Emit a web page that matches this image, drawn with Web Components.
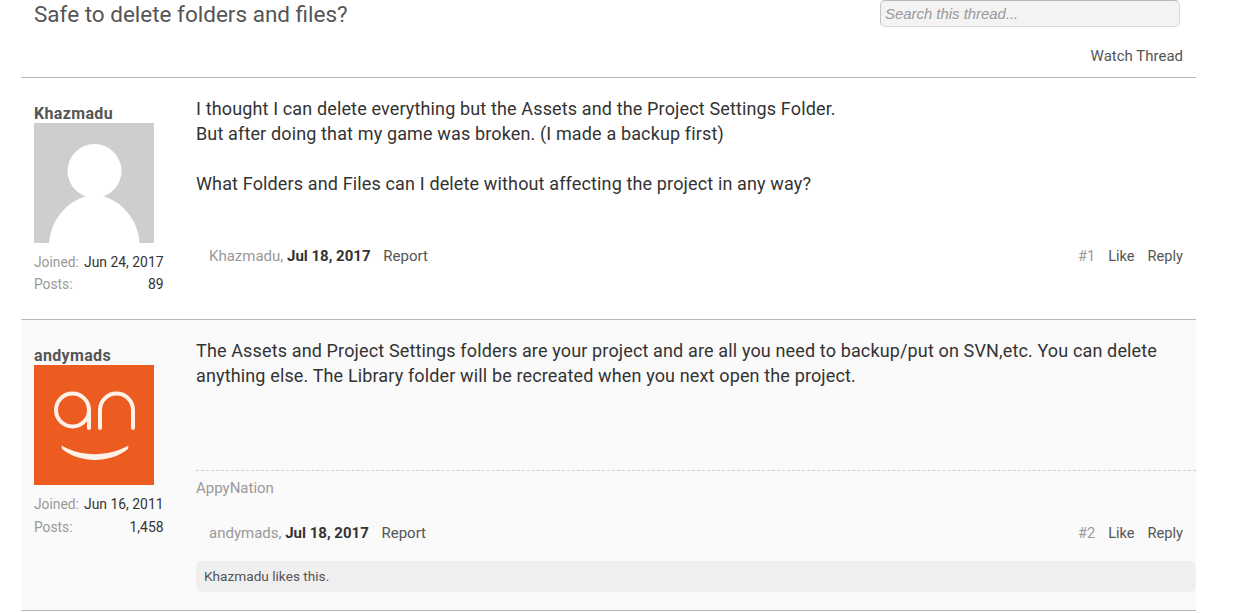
<!DOCTYPE html>
<html lang="en">
<head>
<meta charset="utf-8">
<title>Safe to delete folders and files?</title>
<style>
  html, body { margin: 0; background: #fff; overflow: hidden; }
  body { font-family: Roboto, "Liberation Sans", sans-serif; color: #333; }
  .page { width: 1175px; margin-left: 21px; }
  svg { display: block; }
</style>
</head>
<body>
<template id="thread-header-tpl">
  <style>
    :host { display: block; height: 77px; border-bottom: 1px solid #b8b8b8; }
    .top { display: flex; justify-content: space-between; padding-left: 13px; }
    h1 { margin: 0; font-size: 22.5px; font-weight: 400; line-height: 28px; color: #555; }
    .search {
      box-sizing: border-box; width: 300px; height: 27px; margin-right: 16px; padding: 0 4px;
      background: #f3f3f3; border: 1px solid #d8d8d8; border-top-color: #b8b8b8; border-left-color: #c4c4c4; border-radius: 5px;
      font: italic 14.9px/26px "Liberation Sans", Arial, sans-serif; color: #999;
    }
    .watch { margin-top: 17px; padding-right: 13px; text-align: right; font-size: 15px; line-height: 22px; color: #555; }
  </style>
  <div class="top">
    <h1><slot name="title"></slot></h1>
    <div class="search"><slot name="placeholder"></slot></div>
  </div>
  <div class="watch">Watch Thread</div>
</template>

<template id="post-user-tpl">
  <style>
    :host { display: block; width: 129.500px; flex: none; padding-top: 26px; font-size: 13.9px; }
    .name { font-size: 16px; font-weight: 700; line-height: 19px; letter-spacing: 0.35px; color: #555; }
    .avatar { width: 120px; height: 120px; margin-bottom: 8px; }
    .row { display: flex; justify-content: space-between; height: var(--row, 22.5px); line-height: 22px; color: #333; }
    .row span:first-child { color: #999; font-size: 13.8px; }
  </style>
  <div class="name"><slot name="name"></slot></div>
  <div class="avatar"><slot name="avatar"></slot></div>
  <div class="row"><span>Joined:</span><span><slot name="joined"></slot></span></div>
  <div class="row"><span>Posts:</span><span><slot name="posts"></slot></span></div>
</template>

<template id="post-meta-tpl">
  <style>
    :host { display: flex; justify-content: space-between; padding: 0 13px; font-size: 15px; line-height: 22px; color: #555; }
    .left { color: #999; }
    b { color: #333; font-weight: 700; }
    .report { margin-left: 9px; color: #555; }
    .right { display: flex; gap: 13px; font-size: 14.6px; }
    .num { color: #999; }
  </style>
  <div class="left"><slot name="author"></slot>, <b><slot name="date"></slot></b> <span class="report">Report</span></div>
  <div class="right"><span class="num"><slot name="num"></slot></span><span>Like</span><span>Reply</span></div>
</template>

<template id="forum-post-tpl">
  <style>
    :host { display: flex; box-sizing: border-box; padding-left: 13px; gap: 32.500px; border-bottom: 1px solid #b8b8b8; }
    :host([alt]) { background: #fafafa; }
    .main { flex: 1; min-width: 0; display: flex; flex-direction: column; }
    .body { font-size: 18px; line-height: 25px; letter-spacing: 0.14px; color: #333; }
  </style>
  <slot name="user"></slot>
  <div class="main">
    <div class="body" part="body"><slot name="body"></slot></div>
    <slot></slot>
  </div>
</template>

<div class="page">
  <thread-header>
    <span slot="title">Safe to delete folders and files?</span>
    <span slot="placeholder">Search this thread...</span>
  </thread-header>

  <forum-post style="height:242px; --row:22px" body-top="18" body-height="149">
    <post-user slot="user">
      <span slot="name">Khazmadu</span>
      <svg slot="avatar" width="120" height="120" viewBox="0 0 120 120">
        <rect width="120" height="120" fill="#cecece"/>
        <circle cx="60.5" cy="48" r="27" fill="#fff"/>
        <path d="M15 120C17 95 35 76 57 72H64C86 76 104 95 105.500 120Z" fill="#fff"/>
      </svg>
      <span slot="joined">Jun 24, 2017</span>
      <span slot="posts">89</span>
    </post-user>
    <span slot="body">I thought I can delete everything but the Assets and the Project Settings Folder.<br>But after doing that my game was broken. (I made a backup first)<br><br>What Folders and Files can I delete without affecting the project in any way?</span>
    <post-meta>
      <span slot="author">Khazmadu</span>
      <span slot="date">Jul 18, 2017</span>
      <span slot="num">#1</span>
    </post-meta>
  </forum-post>

  <forum-post alt style="height:291px" body-top="18" body-height="132">
    <post-user slot="user">
      <span slot="name">andymads</span>
      <svg slot="avatar" width="120" height="120" viewBox="0 0 120 120">
        <rect width="120" height="120" fill="#ec5b20"/>
        <g fill="none" stroke="#fdf1e8" stroke-width="4" stroke-linecap="round">
          <circle cx="38.500" cy="45" r="16.500"/>
          <path d="M55 45V63"/>
          <path d="M66 63V45A16.500 16.500 0 0 1 99 45V63"/>
        </g>
        <path d="M27.500 80.500C47 92 74 92 94.500 80.500L94 84C76 98.500 46 98.500 28 84Z" fill="#fdf1e8"/>
      </svg>
      <span slot="joined">Jun 16, 2011</span>
      <span slot="posts">1,458</span>
    </post-user>
    <span slot="body">The Assets and Project Settings folders are your project and are all you need to backup/put on SVN,etc. You can delete anything else. The Library folder will be recreated when you next open the project.</span>
    <post-signature>AppyNation</post-signature>
    <post-meta>
      <span slot="author">andymads</span>
      <span slot="date">Jul 18, 2017</span>
      <span slot="num">#2</span>
    </post-meta>
    <post-likes>Khazmadu likes this.</post-likes>
  </forum-post>
</div>

<script>
  // plain shadow-root wrapper around a template
  function fromTemplate(id) {
    return class extends HTMLElement {
      constructor() {
        super();
        this.attachShadow({ mode: 'open' });
        this.shadowRoot.appendChild(document.getElementById(id).content.cloneNode(true));
      }
    };
  }

  customElements.define('thread-header', fromTemplate('thread-header-tpl'));
  customElements.define('post-user', fromTemplate('post-user-tpl'));
  customElements.define('post-meta', fromTemplate('post-meta-tpl'));

  class ForumPost extends fromTemplate('forum-post-tpl') {
    connectedCallback() {
      const body = this.shadowRoot.querySelector('.body');
      body.style.paddingTop = this.getAttribute('body-top') + 'px';
      body.style.height = this.getAttribute('body-height') + 'px';
    }
  }
  customElements.define('forum-post', ForumPost);

  class PostSignature extends HTMLElement {
    constructor() {
      super();
      this.attachShadow({ mode: 'open' }).innerHTML = `
        <style>
          :host { display: block; height: 52px; box-sizing: border-box; border-top: 1px dashed #d0d0d0; padding-top: 7px; font-size: 15px; line-height: 20px; color: #999; }
        </style>
        <slot></slot>`;
    }
  }
  customElements.define('post-signature', PostSignature);

  class PostLikes extends HTMLElement {
    constructor() {
      super();
      this.attachShadow({ mode: 'open' }).innerHTML = `
        <style>
          :host { display: block; box-sizing: border-box; height: 31px; margin-top: 17px; padding: 0 8px; background: #efefef; border-radius: 6px; font-size: 13.65px; line-height: 31px; color: #555; }
        </style>
        <slot></slot>`;
    }
  }
  customElements.define('post-likes', PostLikes);
</script>
</body>
</html>
